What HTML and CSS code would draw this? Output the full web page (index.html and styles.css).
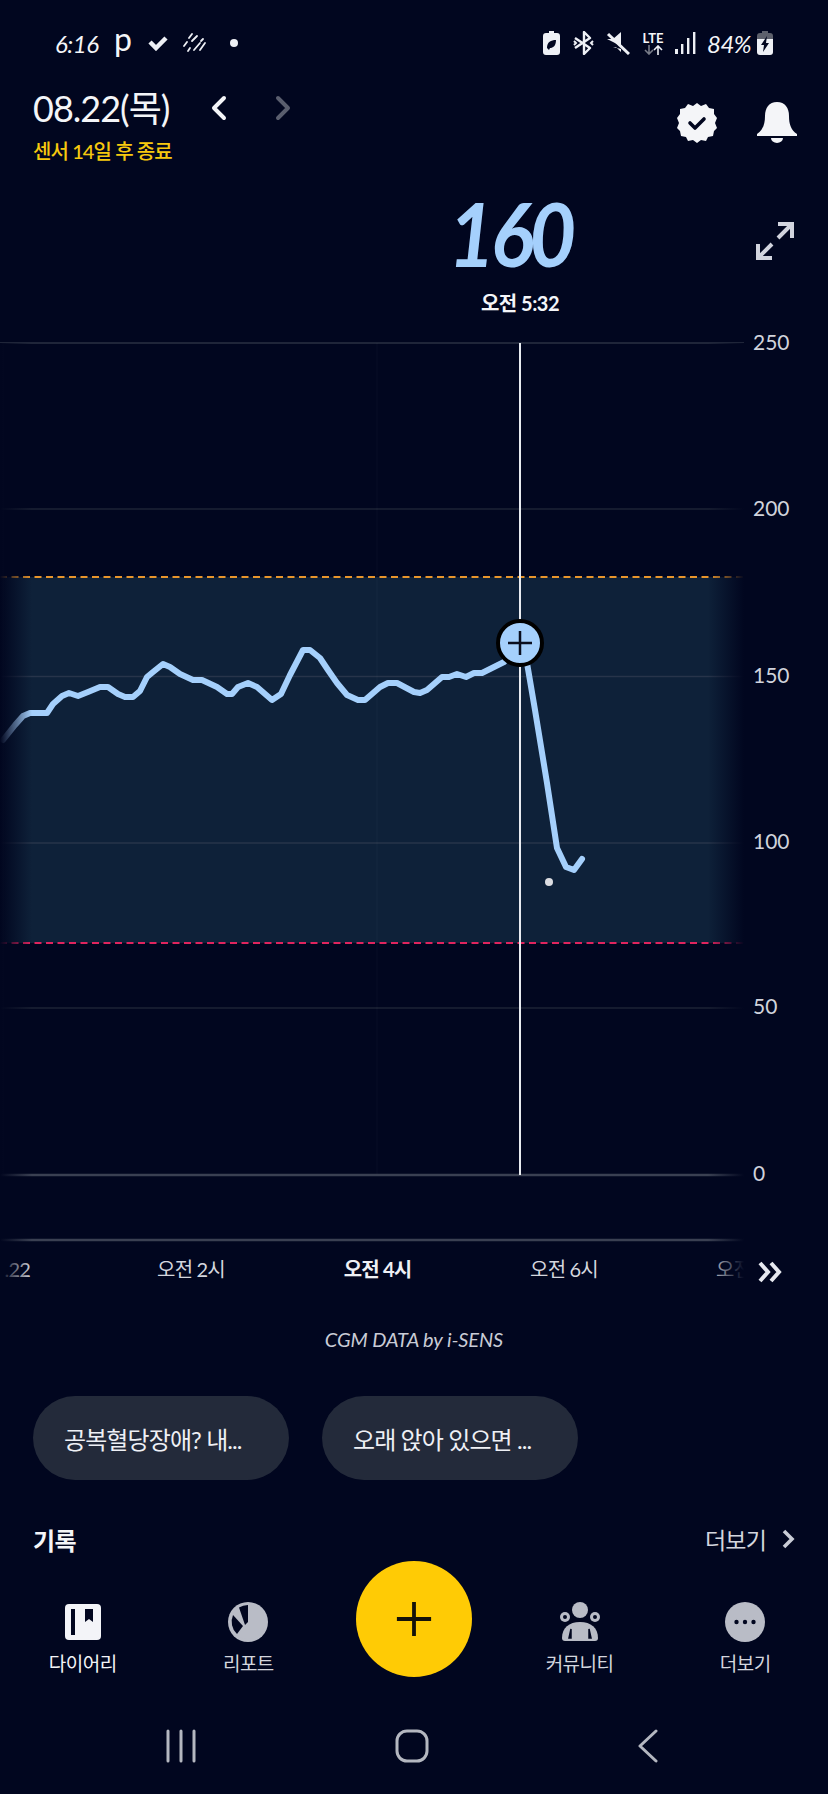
FILE: index.html
```html
<!DOCTYPE html>
<html lang="ko">
<head>
<meta charset="utf-8">
<title>CGM</title>
<link rel="stylesheet" href="styles.css">
</head>
<body>
<div class="screen">
  <div class="status">
    <div class="status-left">
      <span class="clock">6:16</span>
      <span class="p-glyph">p</span>
      <svg class="ic-check" viewBox="0 0 20 16"><path d="M2 7l6 6L18 3" fill="none" stroke="#eef0f5" stroke-width="4.500"/></svg>
      <svg class="ic-rain" viewBox="0 0 24 20"><g stroke="#eef0f5" stroke-width="1.800" stroke-linecap="round" fill="none"><path d="M9 1L6 5M4 9L1 13"/><path d="M9 8l5-5M5 18l2-3"/><path d="M11 17l6-7M18 8l2-2"/><path d="M17 17l5-7"/></g></svg>
      <span class="dot"></span>
    </div>
    <div class="status-right">
      <svg class="ic-batt-leaf" viewBox="0 0 17 24"><path d="M6 0h5v2h3a3 3 0 0 1 3 3v16a3 3 0 0 1-3 3H3a3 3 0 0 1-3-3V5a3 3 0 0 1 3-3h3z" fill="#eef0f5"/><path d="M4 17c0-6 4-8 9-8 0 6-3 8-6 8l-1 2zM7 14l3-3" fill="#01061f"/></svg>
      <svg class="ic-bt" viewBox="0 0 21 24"><path d="M2 7l15 10-6 6V1l6 6L2 17" fill="none" stroke="#eef0f5" stroke-width="2.400" stroke-linejoin="round"/><path d="M1 10l2 2-2 2M20 10l-2 2 2 2" fill="none" stroke="#eef0f5" stroke-width="2"/></svg>
      <svg class="ic-mute" viewBox="0 0 24 24"><path d="M1 8h6l8-7v14zM7 16h3l5 5v-3z" fill="#eef0f5"/><path d="M2 3l21 20" stroke="#eef0f5" stroke-width="3"/></svg>
      <span class="lte"><span class="lte-txt">LTE</span><svg class="ic-arrows" viewBox="0 0 20 10"><path d="M6 0v9M2 5l4 4 4-4" fill="none" stroke="#777b88" stroke-width="1.600"/><path d="M15 10V1M11 5l4-4 4 4" fill="none" stroke="#eef0f5" stroke-width="1.600"/></svg></span>
      <svg class="ic-signal" viewBox="0 0 21 22"><g fill="#eef0f5"><rect x="0" y="17" width="3" height="5"/><rect x="6" y="12" width="2.400" height="10"/><rect x="12" y="6" width="2.400" height="16"/><rect x="18" y="0" width="2.400" height="22"/></g></svg>
      <span class="pct">84%</span>
      <svg class="ic-batt" viewBox="0 0 16 24"><path d="M5 0h6v2h2a3 3 0 0 1 3 3v3H0V5a3 3 0 0 1 3-3h2z" fill="#5d606c"/><path d="M0 8h16v13a3 3 0 0 1-3 3H3a3 3 0 0 1-3-3z" fill="#eef0f5"/><path d="M10 5l-6 9h3l-1 7 6-9H9z" fill="#01061f"/></svg>
    </div>
  </div>

  <header class="head">
    <div class="head-main">
      <div class="date-row">
        <span class="date">08.22(목)</span>
        <svg class="nav-prev" viewBox="0 0 16 26"><path d="M13 3L3 13l10 10" fill="none" stroke="#f4f5f8" stroke-width="4" stroke-linecap="round" stroke-linejoin="round"/></svg>
        <svg class="nav-next" viewBox="0 0 16 26"><path d="M3 3l10 10L3 23" fill="none" stroke="#5a5e6e" stroke-width="4" stroke-linecap="round" stroke-linejoin="round"/></svg>
      </div>
      <div class="sensor">센서 14일 후 종료</div>
    </div>
    <div class="head-icons">
      <svg class="ic-badge" viewBox="0 0 40 40"><path d="M20 0l4 3 5-2 3 4 5 1v5l3 4-2 5 2 5-3 3-1 5-5 1-2 4-5-1-4 3-4-3-5 1-2-4-5-1-1-5-3-3 2-5-2-5 3-4V6l5-1 3-4 5 2z" fill="#f4f5f8"/><path d="M13 20l5 5 9-9" fill="none" stroke="#01061f" stroke-width="3.600" stroke-linecap="round" stroke-linejoin="round"/></svg>
      <svg class="ic-bell" viewBox="0 0 40 41"><path d="M20 0c8 0 12 6 12 14 0 8 2 14 8 18v2H0v-2c6-4 8-10 8-18C8 6 12 0 20 0z" fill="#f4f5f8"/><path d="M14 36h12a6 5 0 0 1-12 0z" fill="#f4f5f8"/></svg>
    </div>
  </header>

  <section class="reading">
    <div class="reading-val">
      <div class="value">160</div>
      <div class="value-time">오전 5:32</div>
    </div>
    <svg class="ic-expand" viewBox="0 0 38 38"><g fill="none" stroke="#d2d4de" stroke-width="4"><path d="M22 2h14v14M35 3L22 16"/><path d="M16 36H2V22M3 35l13-13"/></g></svg>
  </section>

  <svg class="chart" viewBox="0 330 828 975">
    <defs>
      <linearGradient id="fadeL" x1="0" x2="1" y1="0" y2="0"><stop offset="0" stop-color="#01061f"/><stop offset="1" stop-color="#01061f" stop-opacity="0"/></linearGradient>
      <linearGradient id="fadeR" x1="0" x2="1" y1="0" y2="0"><stop offset="0" stop-color="#01061f" stop-opacity="0"/><stop offset="1" stop-color="#01061f"/></linearGradient>
    </defs>
    <rect x="0" y="577" width="744" height="366" fill="#0e2139"/>
    <g stroke-width="1.500" fill="none">
      <path d="M0 343H744" stroke="#2a3043"/>
      <path d="M0 509H744" stroke="#1d2336"/>
      <path d="M0 676.500H744" stroke="#27344a"/>
      <path d="M0 843H744" stroke="#27344a"/>
      <path d="M0 1008H744" stroke="#1d2336"/>
      <path d="M3 343V1175" stroke="#ffffff" stroke-opacity=".05"/>
      <path d="M377 343V1175" stroke="#ffffff" stroke-opacity=".025"/>
    </g>
    <path d="M0 1175H744" stroke="#3a4052" stroke-width="2.500"/>
    <path d="M0 1240H744" stroke="#3a4052" stroke-width="2.500"/>
    <path d="M0 577H744" stroke="#e8952c" stroke-width="2" stroke-dasharray="7 4.500"/>
    <path d="M0 943H744" stroke="#e0245e" stroke-width="2" stroke-dasharray="7 4.500"/>
    <path d="M520 343V1175" stroke="#e8ebf0" stroke-width="2"/>
    <g class="xl">
      <text x="30" y="1277" text-anchor="end">.22</text>
      <text x="191" y="1277" text-anchor="middle">오전 2시</text>
      <text x="377.500" y="1277" text-anchor="middle" class="xl-b">오전 4시</text>
      <text x="564" y="1277" text-anchor="middle">오전 6시</text>
      <text x="750" y="1277" text-anchor="middle">오전 8시</text>
    </g>
    <polyline fill="none" stroke="#a5d0fc" stroke-width="6" stroke-linejoin="round" stroke-linecap="round" points="3,740 15,725 23,716 30,713 47,713 53,704 62,696 69,693 78,696 88,692 100,687 108,687 118,694 125,697 133,697 140,691 147,677 153,672 163,664 170,667 180,674 193,680 202,680 217,687 227,694 232,694 238,687 248,683 257,687 272,700 281,694 290,675 303,650 310,650 320,658 328,670 337,683 347,695 358,700 365,700 380,687 388,683 397,683 414,692 420,693 427,690 442,677 449,677 457,674 466,677 474,673 482,673 494,667 504,662 520,643 527,663 535,710 547,783 557,848 566,867 574,870 582,859"/>
    <rect x="0" y="343" width="32" height="960" fill="url(#fadeL)"/>
    <rect x="708" y="343" width="36" height="960" fill="url(#fadeR)"/>
    <rect x="744" y="343" width="84" height="960" fill="#01061f"/>
    <circle cx="549" cy="882" r="4" fill="#dcdde2"/>
    <circle cx="520" cy="643" r="22" fill="#a5d0fc" stroke="#000" stroke-width="4"/>
    <path d="M508 643H532M520 631V655" stroke="#0a0e1e" stroke-width="2.500"/>
    <g class="yl">
      <text x="753" y="350">250</text>
      <text x="753" y="516">200</text>
      <text x="753" y="683">150</text>
      <text x="753" y="849">100</text>
      <text x="753" y="1014">50</text>
      <text x="753" y="1181">0</text>
    </g>
    <path d="M760 1263l8 9-8 9M771 1263l8 9-8 9" fill="none" stroke="#e6e8ef" stroke-width="4"/>
  </svg>

  <div class="credit">CGM DATA by i-SENS</div>

  <div class="chips">
    <div class="chip">공복혈당장애? 내...</div>
    <div class="chip">오래 앉아 있으면 ...</div>
  </div>

  <div class="section">
    <span class="section-title">기록</span>
    <span class="section-more">더보기<svg class="ic-more" viewBox="0 0 14 20"><path d="M3 2l8 8-8 8" fill="none" stroke="#c9ccd6" stroke-width="3.600"/></svg></span>
  </div>

  <nav class="tabs">
    <div class="tab tab-on">
      <svg class="tab-ic" viewBox="0 0 40 40"><rect x="2" y="2" width="36" height="36" rx="4" fill="#f3f4f8"/><rect x="8" y="7" width="4" height="26" fill="#01061f"/><path d="M22 7h8v13l-4-3-4 3z" fill="#01061f"/></svg>
      <span>다이어리</span>
    </div>
    <div class="tab">
      <svg class="tab-ic" viewBox="0 0 40 40"><circle cx="20" cy="20" r="20" fill="#b9bcc6"/><circle cx="20" cy="20" r="17" fill="#b9bcc6"/><path d="M11 5.500A17 17 0 0 1 20 3V20L17 23z" fill="#01061f"/><path d="M5 13L15 24 9 32A17 17 0 0 1 5 13z" fill="#01061f"/></svg>
      <span>리포트</span>
    </div>
    <div class="tab-spacer"></div>
    <div class="tab">
      <svg class="tab-ic" viewBox="0 0 40 40"><g fill="#b9bcc6"><circle cx="20" cy="8" r="8"/><path d="M5 39c-2 0-3-1-3-3 0-10 7-16 18-16s18 6 18 16c0 2-1 3-3 3z"/><circle cx="5" cy="15" r="5"/><circle cx="35" cy="15" r="5"/></g><circle cx="5" cy="15" r="2" fill="#01061f"/><circle cx="35" cy="15" r="2" fill="#01061f"/><path d="M9 36l2-9v9zM31 36l-2-9v9z" fill="#01061f" stroke="#01061f" stroke-width="1.500"/></svg>
      <span>커뮤니티</span>
    </div>
    <div class="tab">
      <svg class="tab-ic" viewBox="0 0 40 40"><circle cx="20" cy="20" r="20" fill="#b9bcc6"/><circle cx="11.500" cy="20" r="2.200" fill="#01061f"/><circle cx="20" cy="20" r="2.200" fill="#01061f"/><circle cx="28.500" cy="20" r="2.200" fill="#01061f"/></svg>
      <span>더보기</span>
    </div>
    <div class="fab"><svg class="fab-plus" viewBox="0 0 40 40"><path d="M2 20H38M20 2V38" stroke="#14120a" stroke-width="4"/></svg></div>
  </nav>

  <div class="sysbar">
    <svg class="sys-recent" viewBox="0 0 32 34"><path d="M3 2V32M16 2V32M29 2V32" stroke="#b4b7c0" stroke-width="3" stroke-linecap="round"/></svg>
    <svg class="sys-home" viewBox="0 0 34 34"><rect x="2" y="2" width="30" height="30" rx="10" fill="none" stroke="#b4b7c0" stroke-width="3"/></svg>
    <svg class="sys-back" viewBox="0 0 20 34"><path d="M18 2L2 17l16 15" fill="none" stroke="#b4b7c0" stroke-width="3" stroke-linecap="round" stroke-linejoin="round"/></svg>
  </div>
</div>
</body>
</html>
```

FILE: styles.css
```css
* { box-sizing: border-box; }
html, body { margin: 0; padding: 0; background: #01061f; }
body { font-family: Lato, "Noto Sans CJK KR", sans-serif; color: #f4f5f8; }
.screen { width: 828px; height: 1794px; overflow: hidden; display: flex; flex-direction: column; background: #01061f; }
svg { display: block; }

.status { height: 86px; padding: 0 55px; display: flex; align-items: center; justify-content: space-between; }
.status-left, .status-right { display: flex; align-items: center; }
.clock { font-size: 24px; font-style: italic; width: 59px; letter-spacing: -0.5px; }
.p-glyph { font-size: 32px; width: 34px; line-height: 30px; margin-top: -8px; font-weight: 400; }
.ic-check { width: 20px; height: 16px; margin-right: 15px; }
.ic-rain { width: 24px; height: 20px; margin-right: 23px; }
.dot { width: 8px; height: 8px; border-radius: 50%; background: #eef0f5; }
.ic-batt-leaf { width: 17px; height: 24px; margin-right: 13px; }
.ic-bt { width: 21px; height: 24px; margin-right: 12px; }
.ic-mute { width: 24px; height: 24px; margin-right: 11px; }
.lte { display: flex; flex-direction: column; align-items: center; width: 24px; margin-right: 10px; }
.lte-txt { font-size: 13px; line-height: 13px; font-weight: 700; }
.ic-arrows { width: 20px; height: 10px; }
.ic-signal { width: 21px; height: 22px; margin-right: 11px; }
.pct { font-size: 24px; font-style: italic; width: 50px; letter-spacing: -0.5px; }
.ic-batt { width: 16px; height: 24px; }

.head { height: 90px; padding: 0 31px 0 33px; display: flex; justify-content: space-between; align-items: flex-start; }
.head-main { display: flex; flex-direction: column; }
.date-row { display: flex; align-items: center; height: 44px; }
.date { font-size: 36px; line-height: 44px; width: 178px; letter-spacing: -1px; font-weight: 400; }
.nav-prev { width: 16px; height: 26px; margin-right: 48px; }
.nav-next { width: 16px; height: 26px; }
.sensor { font-size: 20px; line-height: 28px; margin-top: 7px; color: #f7c90e; letter-spacing: -0.9px; font-weight: 500; }
.head-icons { display: flex; align-items: center; gap: 40px; margin-top: 16px; }
.ic-badge { width: 40px; height: 40px; }
.ic-bell { width: 40px; height: 41px; }

.reading { height: 154px; display: flex; align-items: flex-start; justify-content: space-between; padding: 0 34px 0 420px; }
.reading-val { width: 200px; display: flex; flex-direction: column; align-items: center; padding-top: 5px; }
.value { font-size: 88px; line-height: 104px; font-style: italic; font-weight: 700; color: #a5d0fc; letter-spacing: -5px; margin-right: 20px; transform: scaleX(0.92); }
.value-time { font-size: 20px; line-height: 28px; font-weight: 700; letter-spacing: -0.5px; margin-top: 4px; }
.ic-expand { width: 38px; height: 38px; margin-top: 46px; }

.chart { width: 828px; height: 975px; flex: none; }
.yl text { font-family: Lato, sans-serif; font-size: 21px; fill: #d0d3dc; font-weight: 400; }
.xl text { font-family: Lato, "Noto Sans CJK KR", sans-serif; font-size: 20px; fill: #d4d6de; letter-spacing: -0.8px; }
.xl .xl-b { font-weight: 700; fill: #eef0f5; }

.credit { font-size: 20px; line-height: 26px; font-style: italic; text-align: center; color: #c9ccd6; margin-top: 21px; letter-spacing: -0.1px; }
.chips { display: flex; gap: 33px; padding-left: 33px; margin-top: 44px; }
.chip { width: 256px; height: 84px; border-radius: 42px; background: #232a3a; padding-left: 31px; display: flex; align-items: center; font-size: 24px; letter-spacing: -0.9px; color: #eef0f5; white-space: nowrap; }

.section { height: 40px; margin-top: 39px; padding: 0 33px 0 33px; display: flex; align-items: center; justify-content: space-between; }
.section-title { font-size: 24px; font-weight: 700; letter-spacing: -0.5px; }
.section-more { font-size: 23px; color: #d4d6de; display: flex; align-items: center; gap: 15px; letter-spacing: -0.8px; }
.ic-more { width: 14px; height: 20px; }

.tabs { position: relative; display: grid; grid-template-columns: repeat(5, 1fr); margin-top: 43px; height: 92px; }
.tab { display: flex; flex-direction: column; align-items: center; gap: 10px; font-size: 19px; line-height: 24px; color: #d4d6de; letter-spacing: -0.5px; }
.tab-on { color: #f4f5f8; }
.tab-ic { width: 40px; height: 40px; }
.fab { position: absolute; left: 356px; top: -41px; width: 116px; height: 116px; border-radius: 50%; background: #ffcb05; display: flex; align-items: center; justify-content: center; }
.fab-plus { width: 38px; height: 38px; }

.sysbar { margin-top: 35px; height: 34px; padding-left: 165px; display: flex; align-items: center; }
.sys-recent { width: 32px; height: 34px; margin-right: 198px; }
.sys-home { width: 34px; height: 34px; margin-right: 209px; }
.sys-back { width: 20px; height: 34px; }
```
